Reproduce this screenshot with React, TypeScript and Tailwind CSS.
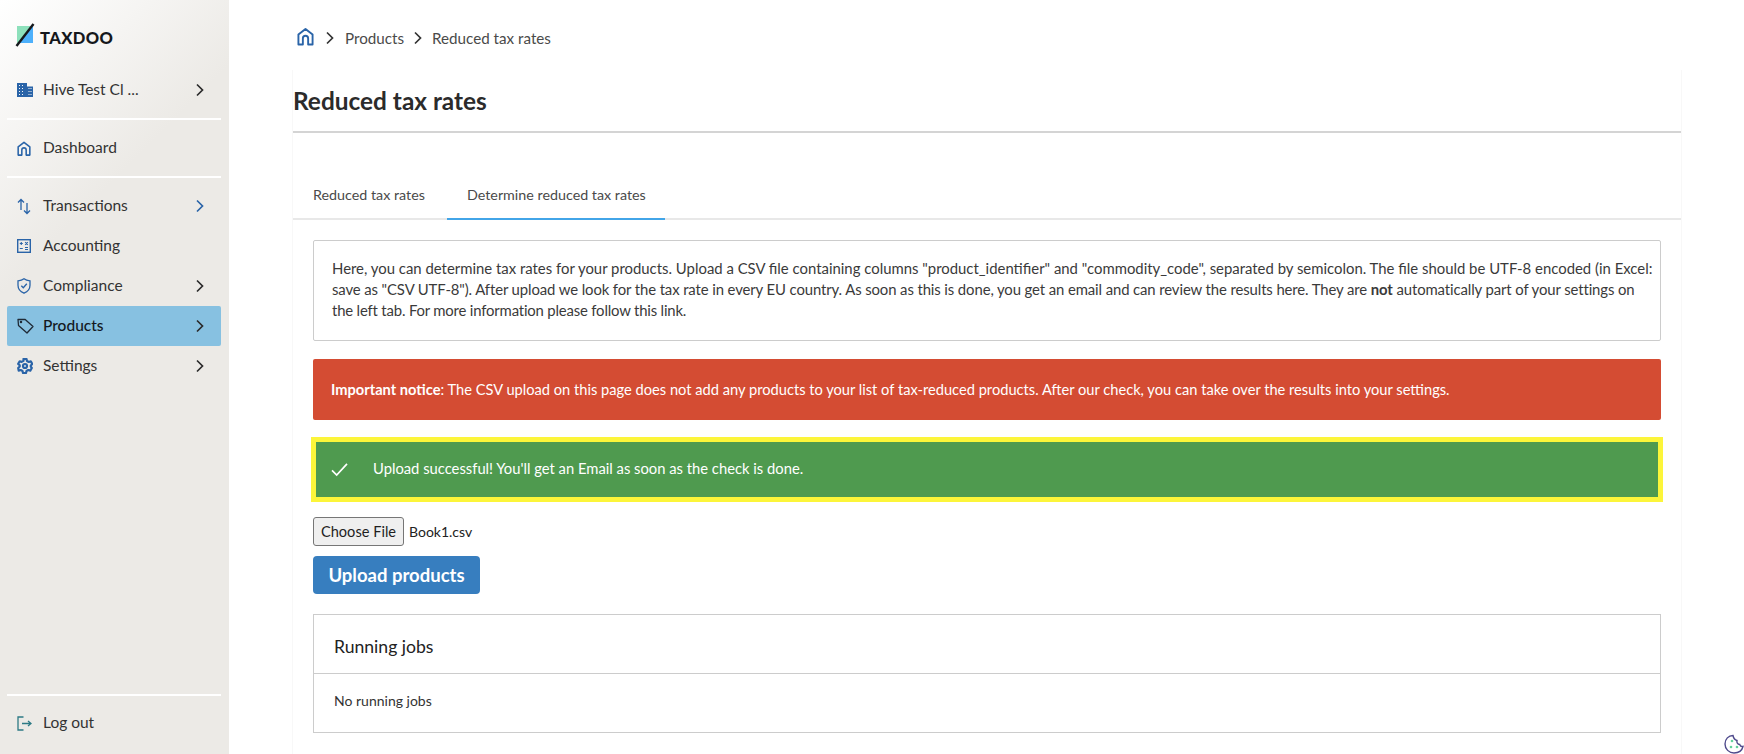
import React from 'react';

const Chevron = ({ className = 'text-[#2b2b2b]' }: { className?: string }) => (
  <svg viewBox="0 0 10 14" className={`w-[10px] h-[14px] ${className}`} fill="none" stroke="currentColor" strokeWidth="1.7">
    <path d="M2 1.500 7.500 7 2 12.500" />
  </svg>
);

const HomeIcon = ({ className, weight = 1.7 }: { className: string; weight?: number }) => (
  <svg viewBox="0 0 18 19" className={className} fill="none" stroke="currentColor" strokeWidth={weight} strokeLinejoin="round">
    <path d="M1.500 7.500 9 1.500l7.500 6V18h-4.700v-6.500a2.800 2.800 0 0 0-5.600 0V18H1.500z" />
  </svg>
);

const BuildingIcon = () => (
  <svg viewBox="0 0 16 14" className="w-4 h-[14px] text-[#2a64a8]" fill="currentColor">
    <path fillRule="evenodd" d="M0 0h10v3.500h6V14H0zM2 2v1h1V2zm3 0v1h1V2zM2 5v1h1V5zm3 0v1h1V5zm6.500 0v1h1V5zm2 0v1h1V5zM2 8v1h1V8zm3 0v1h1V8zm6.500 0v1h1V8zm2 0v1h1V8zM2 11v1h1v-1zm3 0v1h1v-1zm6.500 0v1h1v-1zm2 0v1h1v-1z" />
  </svg>
);

const ArrowsIcon = () => (
  <svg viewBox="0 0 14 17" className="w-[14px] h-[17px] text-[#2a64a8]" fill="none" stroke="currentColor" strokeWidth="1.300">
    <path d="M4 12V1.500M1 4.500l3-3 3 3M10 5v10.500M7 12.500l3 3 3-3" />
  </svg>
);

const AccountingIcon = () => (
  <svg viewBox="0 0 14 14" className="w-[14px] h-[14px] text-[#2a64a8]" fill="none" stroke="currentColor">
    <rect x=".7" y=".7" width="12.600" height="12.600" strokeWidth="1.400" />
    <path d="M2.800 4.500h3M4.300 3v3M8.200 3.200l2.600 2.600M10.800 3.200 8.200 5.800M2.800 9.500h3M8 8.500h3M8 10.500h3" strokeWidth="1.100" />
  </svg>
);

const ShieldIcon = () => (
  <svg viewBox="0 0 14 16" className="w-[14px] h-4 text-[#2a64a8]" fill="none" stroke="currentColor" strokeWidth="1.300">
    <path d="M7 .8c1.500 1.200 3.500 1.900 6 2.100v4.300c0 3.600-2.300 6.400-6 8-3.700-1.600-6-4.400-6-8V2.900C3.500 2.700 5.500 2 7 .8z" />
    <path d="M4.300 7.800 6.300 9.800 9.800 5.800" />
  </svg>
);

const TagIcon = () => (
  <svg viewBox="0 0 17 16" className="w-[17px] h-4 text-[#1f2a36]" fill="none" stroke="currentColor" strokeWidth="1.300" strokeLinejoin="round">
    <path d="M1 1.500h7.200l7.800 7-6 6.500L1.500 7.500z" />
    <circle cx="4" cy="4" r=".6" fill="currentColor" />
  </svg>
);

const GearIcon = () => (
  <svg viewBox="0 0 16 16" className="w-4 h-4 text-[#2a64a8]" fill="none" stroke="currentColor" strokeWidth="2.200" strokeLinejoin="round">
    <path d="M6.500 1h3l.5 2 1.800 1 2-.6 1.500 2.600-1.500 1.500v1.200L14.800 10l-1.500 2.600-2-.6-1.800 1-.5 2h-3l-.5-2-1.800-1-2 .6L1.200 10l1.500-1.500V7.300L1.200 5.900l1.500-2.600 2 .6 1.800-1z" />
    <circle cx="8" cy="8" r="2" />
  </svg>
);

const LogoutIcon = () => (
  <svg viewBox="0 0 15 15" className="w-[15px] h-[15px] text-[#2d7a85]" fill="none" stroke="currentColor" strokeWidth="1.300">
    <path d="M6.500 1H1v13h5.500" />
    <path d="M5 7.500h9M11 5l3 2.500-3 2.500" />
  </svg>
);

const NavItem = ({ icon, label, arrow, active, arrowClass }: { icon: React.ReactNode; label: string; arrow?: boolean; active?: boolean; arrowClass?: string }) => (
  <div className={`h-10 flex items-center pl-[10px] pr-[16px] rounded-[2px] ${active ? 'bg-[#87c1e1] text-[#14191f] font-medium' : 'text-[#333333]'}`}>
    <span className="w-[26px] flex items-center">{icon}</span>
    <span className="flex-1 text-[15.500px]">{label}</span>
    {arrow && <Chevron className={arrowClass} />}
  </div>
);

const Divider = () => <div className="h-[2px] bg-white" />;

export default function App() {
  return (
    <div className="flex h-screen overflow-hidden bg-white text-[#333333] font-['Lato','Liberation_Sans',sans-serif]">
      <aside className="w-[229px] shrink-0 flex flex-col pl-[7px] pr-[8px] bg-[linear-gradient(135deg,#ffffff_0%,#eceae6_30%)]">
        <div className="h-[70px] pt-[23px] pl-[8px] flex items-start">
          <svg viewBox="0 0 20 24" className="w-5 h-6">
            <path d="M2 3h14.500L3.300 20H2z" fill="#8de0bb" />
            <path d="M18 3v17H3.300z" fill="#4db0fb" />
            <path d="M18.500 1 1.500 23" stroke="#15181c" strokeWidth="2.400" />
          </svg>
          <span className="ml-[5px] mt-[6px] text-[16.500px] leading-[18px] font-black tracking-[0.4px] text-[#15181c]">TAXDOO</span>
        </div>
        <NavItem icon={<BuildingIcon />} label="Hive Test Cl ..." arrow />
        <div className="mt-[8px]"><Divider /></div>
        <div className="py-[8px]">
          <NavItem icon={<HomeIcon className="w-[14px] h-[15px] text-[#2a64a8]" weight={2} />} label="Dashboard" />
        </div>
        <Divider />
        <div className="pt-[8px]">
          <NavItem icon={<ArrowsIcon />} label="Transactions" arrow arrowClass="text-[#2a64a8]" />
          <NavItem icon={<AccountingIcon />} label="Accounting" />
          <NavItem icon={<ShieldIcon />} label="Compliance" arrow />
          <NavItem icon={<TagIcon />} label="Products" arrow active />
          <NavItem icon={<GearIcon />} label="Settings" arrow />
        </div>
        <div className="mt-auto"><Divider /></div>
        <div className="pt-[7px] pb-[11px]">
          <NavItem icon={<LogoutIcon />} label="Log out" />
        </div>
      </aside>

      <main className="flex-1 min-w-0 pl-[63px] pr-[62px] relative">
        <div className="h-[70px] pt-[27px] flex items-start text-[15.200px] text-[#4a4a4a]">
          <HomeIcon className="w-[17px] h-[19px] text-[#2a64a8] ml-[5px]" weight={2} />
          <span className="ml-[11px] mr-[10px] mt-[4px]"><Chevron className="text-[#333333]" /></span>
          <span className="leading-[22px]">Products</span>
          <span className="mx-[9px] mt-[4px]"><Chevron className="text-[#333333]" /></span>
          <span className="leading-[22px]">Reduced tax rates</span>
        </div>

        <div className="border-l border-r border-[#f8f8f8] h-full">
          <div className="h-[63px] pt-[1px] flex items-center border-b-2 border-[#d4d4d4]">
            <h1 className="text-[24.400px] font-bold text-[#2b2b2b]">Reduced tax rates</h1>
          </div>

          <div className="h-[87px] flex items-end border-b-2 border-[#e8e8e8] pl-[20px]">
            <div className="h-[48px] pt-[1px] flex items-center w-[134px] text-[14.300px] text-[#4a4a4a]">Reduced tax rates</div>
            <div className="h-[50px] pt-[1px] -mb-[2px] flex items-center px-[20px] w-[218px] border-b-2 border-[#42a5e8] text-[14.300px] text-[#4a4a4a] whitespace-nowrap">Determine reduced tax rates</div>
          </div>

          <div className="px-[20px] pt-[20px]">
            <div className="border border-[#cccccc] rounded-[2px] h-[101px] px-[18px] pt-[17px] text-[14.900px] leading-[21px] text-[#3a3a3a] whitespace-nowrap">
              Here, you can determine tax rates for your products. Upload a CSV file containing columns "product_identifier" and "commodity_code", separated by semicolon. The file should be UTF-8 encoded (in Excel:<br />
              <span className="tracking-[-0.11px]">save as "CSV UTF-8"). After upload we look for the tax rate in every EU country. As soon as this is done, you get an email and can review the results here. They are <strong>not</strong> automatically part of your settings on</span><br />
              <span className="tracking-[-0.18px]">the left tab. For more information please follow this link.</span>
            </div>

            <div className="mt-[18px] h-[61px] flex items-center px-[18px] bg-[#d44c33] rounded-[2px] text-white text-[14.670px]">
              <span><strong>Important notice</strong>: The CSV upload on this page does not add any products to your list of tax-reduced products. After our check, you can take over the results into your settings.</span>
            </div>

            <div className="mt-[17px] -mx-[2px] h-[65px] border-[5px] border-[#fcf53a] bg-[#4f9a4f] flex items-center text-white text-[14.770px]">
              <svg viewBox="0 0 20 16" className="ml-[14px] w-[19px] h-[15px]" fill="none" stroke="white" strokeWidth="1.800">
                <path d="M2 9l5 5L18 2" />
              </svg>
              <span className="ml-[24px] -mt-[2px]">Upload successful! You'll get an Email as soon as the check is done.</span>
            </div>

            <div className="mt-[15px] flex items-center h-[29px]">
              <button className="h-[29px] w-[91px] border border-[#767676] rounded-[3px] bg-[#efefef] text-[14.600px] text-[#1f1f1f]">Choose File</button>
              <span className="ml-[5px] -mt-[1px] text-[14px] text-[#222222]">Book1.csv</span>
            </div>

            <button className="mt-[10px] pt-[1px] block h-[38px] w-[167px] rounded-[4px] bg-[#377ebf] text-white text-[18.500px] font-bold">Upload products</button>

            <div className="mt-[20px] border border-[#cccccc]">
              <div className="h-[59px] pt-[6px] flex items-center px-[20px] text-[17.600px] text-[#222222] border-b border-[#cccccc]">Running jobs</div>
              <div className="h-[58px] pb-[6px] flex items-center px-[20px] text-[14px] text-[#333333]">No running jobs</div>
            </div>
          </div>
        </div>

        <svg viewBox="0 0 20 20" className="absolute right-0 bottom-0 w-5 h-5" fill="none">
          <path d="M9 1.500C4.500 1.500 1 5 1 10c0 5 4 9 9 9 4.500 0 8-2.500 9-6.500-1.500.3-2.800-.5-3.300-2C13.500 10.300 12.500 8.500 13 6.500 11 6 9.500 4 9 1.500z" stroke="#4f4a8c" strokeWidth="1.400" />
          <circle cx="8" cy="7" r="1.300" fill="#63d29c" />
          <circle cx="7" cy="13" r="1.300" fill="#63d29c" />
          <circle cx="13" cy="13" r="1.300" fill="#63d29c" />
        </svg>
      </main>
    </div>
  );
}
